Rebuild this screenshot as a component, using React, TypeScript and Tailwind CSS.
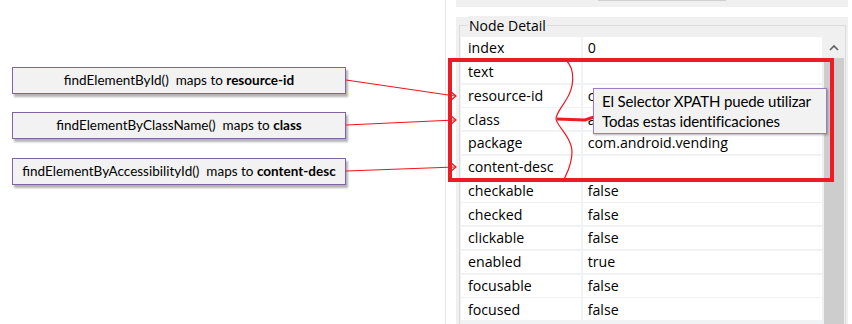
import React from "react";

type Row = { key: string; value: string };

const rows: Row[] = [
  { key: "index", value: "0" },
  { key: "text", value: "" },
  { key: "resource-id", value: "com.android.vending:id/main" },
  { key: "class", value: "android.widget.FrameLayout" },
  { key: "package", value: "com.android.vending" },
  { key: "content-desc", value: "" },
  { key: "checkable", value: "false" },
  { key: "checked", value: "false" },
  { key: "clickable", value: "false" },
  { key: "enabled", value: "true" },
  { key: "focusable", value: "false" },
  { key: "focused", value: "false" },
];

const MapBox = (props: { fn: string; target: string }) => {
  return (
    <div className="flex h-[27px] w-[334px] items-center justify-center border-[1.5px] border-[#8064a2] bg-[#f2f2f2] text-[13.5px] text-black shadow-[2px_3px_2px_rgba(0,0,0,0.3)]">
      <span>{props.fn}&nbsp; maps to&nbsp;</span>
      <span className="font-bold">{props.target}</span>
    </div>
  );
};

// red arrows, brace and highlight drawn over the page
const Annotations = () => {
  const red = "#ed1c24";
  return (
    <svg
      className="pointer-events-none absolute inset-0"
      width={852}
      height={324}
      viewBox="0 0 852 324"
    >
      <g stroke="#f0141c" strokeWidth={1.2} fill="none">
        <path d="M346 80 L455 96" />
        <path d="M450 91 L456 96 L450 101" />
        <path d="M346 125 L455 120" />
        <path d="M450 115 L456 120 L450 125" />
        <path d="M346 171 L455 167" />
        <path d="M450 162 L456 167 L450 172" />
      </g>
      <rect x={450} y={60} width={382} height={120} stroke={red} strokeWidth={4} fill="none" />
      <path
        d="M566 60 C 576 70, 574 88, 566 100 C 560 110, 556 114, 556 119 C 557 126, 572 138, 572 152 C 572 166, 566 174, 563 182"
        stroke="#f0141c"
        strokeWidth={1.2}
        fill="none"
      />
      <path d="M557 119 L585 120 L594 117" stroke={red} strokeWidth={3} fill="none" />
    </svg>
  );
};

export default function App() {
  return (
    <div
      className="relative flex h-[324px] w-[852px] overflow-hidden bg-white text-black"
      style={{ fontFamily: "'Open Sans', 'Noto Sans', sans-serif" }}
    >
      {/* Left: mapping boxes */}
      <div
        className="flex w-[445px] shrink-0 flex-col pl-[12px] pt-[67px]"
        style={{ fontFamily: "Lato, 'Liberation Sans', sans-serif" }}
      >
        <MapBox fn="findElementById()" target="resource-id" />
        <div className="h-[18px]" />
        <MapBox fn="findElementByClassName()" target="class" />
        <div className="h-[19px]" />
        <MapBox fn="findElementByAccessibilityId()" target="content-desc" />
      </div>

      {/* Right: UI Automator panel */}
      <div className="flex w-[407px] shrink-0 flex-col border-l border-[#e6e6e6] pl-[10px]">
        <div className="flex h-[7px] w-[392px] justify-center bg-[#f0f0f0]">
          <div className="ml-[20px] h-[1px] w-[128px] bg-[#d0d0d0]" />
        </div>
        <div className="h-[10px]" />
        <div className="relative flex w-[392px] flex-1 flex-col bg-[#f0f0f0]">
          <div className="absolute left-[3px] right-[2px] top-[8px] bottom-0 border-l border-t border-r border-[#dcdcdc]" />
          <div className="relative h-[20px] pl-[12px] text-[14px] leading-[17px]">
            <span className="bg-[#f0f0f0] px-[1px]">Node Detail</span>
          </div>
          <div className="relative flex flex-1">
            <div className="ml-[5px] flex w-[361px] flex-col gap-[1.75px] bg-[#f0f2f4] text-[14.2px]">
              {rows.map((r) => (
                <div key={r.key} className="flex h-[22px] shrink-0 gap-[1.7px]">
                  <div className="flex w-[120px] items-center bg-white pl-[7px]">{r.key}</div>
                  <div className="flex flex-1 items-center bg-white pl-[5px] whitespace-nowrap">{r.value}</div>
                </div>
              ))}
            </div>
            <div className="ml-[2px] flex w-[20px] flex-col">
              <div className="flex h-[21px] items-center justify-center text-[#606060]">
                <svg width="10" height="7" viewBox="0 0 10 7">
                  <path d="M1 6 L5 2 L9 6" stroke="#606060" strokeWidth="1.6" fill="none" />
                </svg>
              </div>
              <div className="flex-1 bg-[#cdcdcd]" />
            </div>
          </div>
        </div>
      </div>

      <Annotations />

      {/* Callout */}
      <div
        className="absolute left-[593px] top-[88px] flex h-[46px] w-[234px] flex-col justify-center border border-[#9a7cc0] bg-[#f2f2f2] pl-[8px] text-[15px] leading-[20px] tracking-[-0.15px] shadow-[1px_1px_2px_rgba(0,0,0,0.3)]"
        style={{ fontFamily: "Lato, 'Liberation Sans', sans-serif" }}
      >
        <div>El Selector XPATH puede utilizar</div>
        <div>Todas estas identificaciones</div>
      </div>
    </div>
  );
}
